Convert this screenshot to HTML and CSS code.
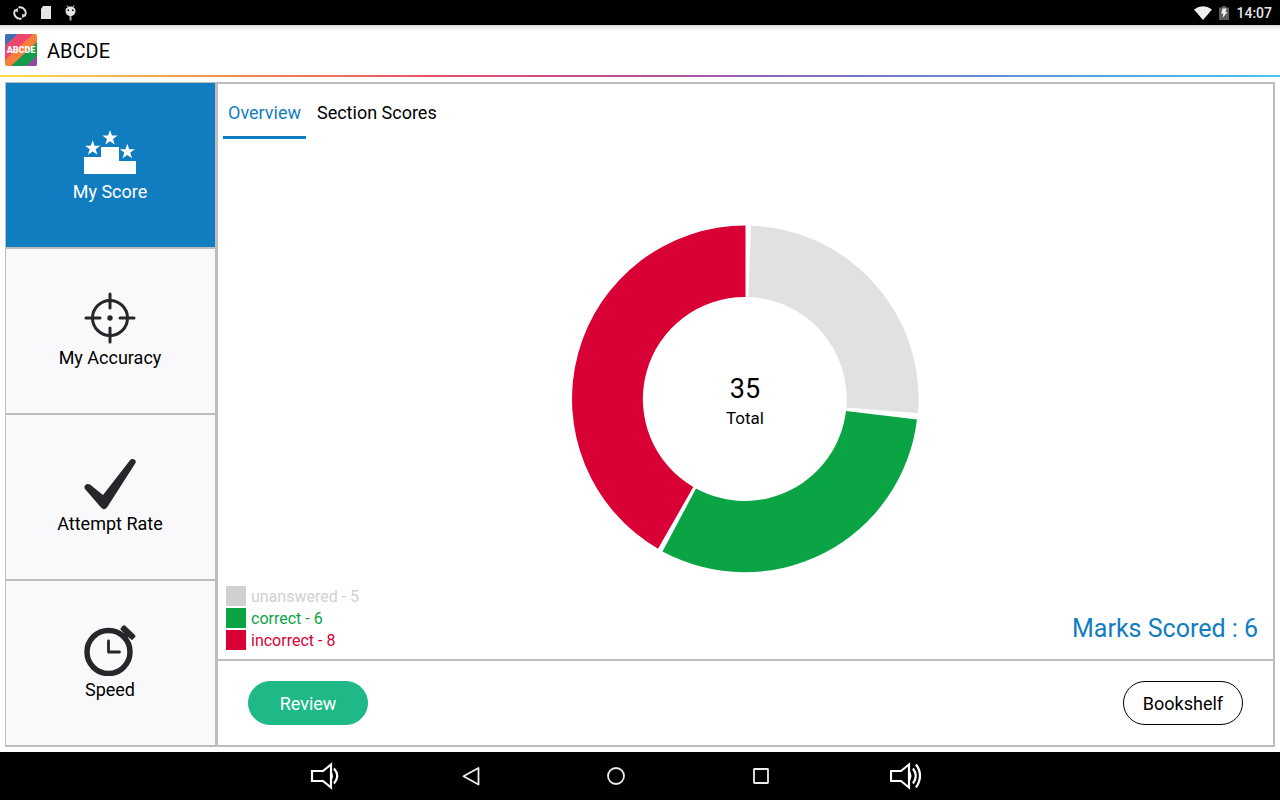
FILE: index.html
```html
<!DOCTYPE html>
<html lang="en">
<head>
<meta charset="utf-8">
<meta name="viewport" content="width=device-width, initial-scale=1">
<title>ABCDE</title>
<link rel="stylesheet" href="styles.css">
</head>
<body>
<div class="status-bar">
  <div class="status-icons">
    <svg width="14" height="14" viewBox="0 0 14 14" aria-hidden="true"><g fill="none" stroke="#e6e6e6" stroke-width="1.900"><path d="M8.500 12.500A5.600 5.600 0 0 1 2.300 4M5.500 1.500A5.600 5.600 0 0 1 11.700 10"/></g><path d="M.8 4.200L4.800 2v4.200zM13.200 9.800L9.200 12V7.800z" fill="#e6e6e6"/></svg>
    <svg width="10" height="13" viewBox="0 0 10 13" aria-hidden="true"><path d="M2 0h8v13H0V3z" fill="#e6e6e6"/></svg>
    <svg width="11" height="16" viewBox="0 0 11 16" aria-hidden="true"><path d="M2 .5l1.500 2M9 .5l-1.500 2" stroke="#e6e6e6"/><path d="M.5 6C.5 3 3 1.500 5.500 1.500S10.500 3 10.500 6C10.500 9 8 11 5.500 11S.5 9 .5 6z" fill="#e6e6e6"/><path d="M4.500 11h2v4.500h-2z" fill="#aaa"/><path d="M2.500 4.500h1.500v1.500H2.500zM7 4.500h1.500v1.500H7z" fill="#000"/></svg>
  </div>
  <div class="status-info">
    <svg width="18" height="14" viewBox="0 0 18 14" aria-hidden="true"><path d="M0 3.500Q9-3 18 3.500L9 14z" fill="#eee"/></svg>
    <svg width="10" height="14" viewBox="0 0 10 14" aria-hidden="true"><path d="M3 0h4v1.500h3V14H0V1.500h3z" fill="#5c5c5c"/><path d="M3.500 2.500h4L6.500 6H8.500L3.500 12l.8-4.300H2.200z" fill="#eee"/></svg>
    <span class="clock">14:07</span>
  </div>
</div>

<header class="app-header">
  <div class="logo">
    <svg class="logo-art" viewBox="0 0 32 32" aria-hidden="true"><path d="M0 0h32v32H0z" fill="#f57f3b"/><path d="M0 0h13L0 12z" fill="#3d6db5"/><path d="M13 0h15L0 26V12z" fill="#f0456f"/><path d="M32 8v14L21 32H6z" fill="#119c4b"/><path d="M32 22v10H21z" fill="#8e4a9e"/></svg>
    <span class="logo-text">ABCDE</span>
  </div>
  <h1 class="app-title">ABCDE</h1>
</header>
<div class="rainbow"></div>

<main class="workspace">
  <nav class="side-nav" aria-label="Reports">
    <button class="side-item side-item-active" type="button">
      <svg class="side-icon" viewBox="0 0 52 52" aria-hidden="true"><path d="M0 31h17V21h18v14h17v13H0z" fill="#fff"/><g fill="#fff"><path id="star" d="M26 4l1.900 5.500h5.700l-4.600 3.400 1.700 5.600-4.700-3.300-4.700 3.300 1.700-5.600-4.600-3.400h5.700z"/><use href="#star" x="-17.300" y="10.300"/><use href="#star" x="17.300" y="13.700"/></g></svg>
      <span>My Score</span>
    </button>
    <button class="side-item" type="button">
      <svg class="side-icon" viewBox="0 0 52 52" aria-hidden="true"><g fill="none" stroke="#26272b" stroke-width="3"><circle cx="26" cy="26" r="17.500"/><path stroke-linecap="round" d="M26 2v14M26 36v14M2 26h14M36 26h14"/></g><circle cx="26" cy="26" r="2.700" fill="#26272b"/></svg>
      <span>My Accuracy</span>
    </button>
    <button class="side-item" type="button">
      <svg class="side-icon" viewBox="0 0 52 52" aria-hidden="true"><path d="M1 31C-1 28 2.500 24.500 6 26.500L19 37 46 2.300C48-.2 53 1.500 51.500 5L23 49.500Q20 53 17 49.500z" fill="#26272b"/></svg>
      <span>Attempt Rate</span>
    </button>
    <button class="side-item" type="button">
      <svg class="side-icon" viewBox="0 0 52 52" aria-hidden="true"><circle cx="24.500" cy="28" r="21.500" fill="none" stroke="#26272b" stroke-width="5.500"/><path d="M24.500 17v11h11" fill="none" stroke="#26272b" stroke-width="2.800" stroke-linecap="round" stroke-linejoin="round"/><path d="M41 1.500L51 11q1 1.200 0 2.300l-2 2q-1 1-2.200 0L44 13l-2.500 3-4-4 2.500-3-3.200-2.900q-1-1 0-2.200l2-2.200q1-1 2.200-.2z" fill="#26272b"/></svg>
      <span>Speed</span>
    </button>
  </nav>

  <section class="report">
    <div class="tabs" role="tablist">
      <button class="tab tab-active" type="button" role="tab" aria-selected="true">Overview</button>
      <button class="tab" type="button" role="tab" aria-selected="false">Section Scores</button>
    </div>
    <div class="chart">
      <svg class="donut" viewBox="0 0 348 348" role="img" aria-label="5 unanswered, 6 correct, 8 incorrect">
        <path d="M180 .7A173.500 173.500 0 0 1 347 188L275.300 182.500A102 102 0 0 0 177.500 72z" fill="#e1e1e1"/>
        <path d="M346 194.500A173.500 173.500 0 0 1 91.500 326.500L125 263.500A102 102 0 0 0 275 186z" fill="#0ba444"/>
        <path d="M174.500.5A173.500 173.500 0 0 0 87 323.800L122.300 262A102 102 0 0 1 174.500 72z" fill="#d80035"/>
      </svg>
      <div class="total"><span class="total-value">35</span><span class="total-label">Total</span></div>
    </div>
    <div class="summary">
      <ul class="legend">
        <li class="legend-item unanswered"><i class="swatch"></i>unanswered - 5</li>
        <li class="legend-item correct"><i class="swatch"></i>correct - 6</li>
        <li class="legend-item incorrect"><i class="swatch"></i>incorrect - 8</li>
      </ul>
      <p class="marks">Marks Scored : 6</p>
    </div>
    <div class="actions">
      <button class="pill pill-primary" type="button">Review</button>
      <button class="pill" type="button">Bookshelf</button>
    </div>
  </section>
</main>

<nav class="system-nav" aria-label="System">
  <button class="sys-button" type="button" aria-label="Volume down"><svg width="32" height="28" viewBox="0 0 32 28"><g fill="none" stroke="#fff" stroke-width="2.200"><path d="M1 9h11l8-6.500v23L12 19H1z" transform="translate(1)"/><path d="M24 6.500q6.500 7.500 0 15"/></g><path d="M20 8q6 6 0 12z" fill="#fff"/></svg></button>
  <button class="sys-button" type="button" aria-label="Back"><svg width="32" height="28" viewBox="0 0 32 28"><path d="M23.500 6v16.500L8.500 14.200z" fill="none" stroke="#eee" stroke-width="1.800" stroke-linejoin="round"/></svg></button>
  <button class="sys-button" type="button" aria-label="Home"><svg width="32" height="28" viewBox="0 0 32 28"><circle cx="16" cy="14" r="8" fill="none" stroke="#eee" stroke-width="1.800"/></svg></button>
  <button class="sys-button" type="button" aria-label="Recent apps"><svg width="32" height="28" viewBox="0 0 32 28"><rect x="9" y="7" width="14" height="14" rx=".5" fill="none" stroke="#eee" stroke-width="1.800"/></svg></button>
  <button class="sys-button" type="button" aria-label="Volume up"><svg width="32" height="28" viewBox="0 0 32 28"><g fill="none" stroke="#fff" stroke-width="2.200"><path d="M1 9h10l8-6.500v23L11 19H1z"/><path d="M23 6.500q5.500 7.500 0 15M26 2.500q8 11 0 23"/></g><path d="M19 8q5 6 0 12z" fill="#fff"/></svg></button>
</nav>
</body>
</html>
```
FILE: styles.css
```css
* { box-sizing: border-box; }

body {
  margin: 0;
  min-height: 100vh;
  display: flex;
  flex-direction: column;
  background: #fff;
  color: #000;
  font-family: Roboto, sans-serif;
  font-size: 18px;
}

button {
  margin: 0;
  padding: 0;
  border: 0;
  background: none;
  color: inherit;
  font: inherit;
  cursor: pointer;
}

svg { display: block; }

.status-bar {
  display: flex;
  align-items: center;
  justify-content: space-between;
  height: 25px;
  padding: 0 8px 0 13px;
  background: #000;
}

.status-icons { display: flex; align-items: center; gap: 14px; }
.status-info { display: flex; align-items: center; gap: 7px; }

.clock {
  color: #e6e6e6;
  font-size: 14px;
  font-weight: 500;
  line-height: 24px;
}

.app-header {
  display: flex;
  align-items: center;
  gap: 10px;
  height: 50px;
  padding: 0 5px;
  background: linear-gradient(#dcdcdc, #fff 6px);
}

.logo {
  display: grid;
  grid-template-columns: 32px;
  place-items: center;
  width: 32px;
  height: 32px;
  border-radius: 2px;
  overflow: hidden;
}

.logo-art, .logo-text { grid-area: 1 / 1; }

.logo-text {
  color: #fff;
  font-size: 9px;
  font-weight: 900;
  line-height: 12px;
}

.app-title {
  margin: 0;
  padding-top: 2px;
  font-size: 20px;
  font-weight: 400;
  line-height: 24px;
}

.rainbow {
  height: 2px;
  background: linear-gradient(90deg, #f6e04a, #ef8354 20%, #e8506a 34%, #b8509a 50%, #7a72c8 66%, #5a9ae0 82%, #42c4f0);
}

.workspace {
  flex: 1;
  display: flex;
  padding: 5px;
}

.side-nav {
  display: flex;
  flex-direction: column;
  gap: 2px;
  width: 210px;
  padding: 1px 0 2px 1px;
  background: #bdbdbd;
}

.side-item {
  flex: 1;
  display: flex;
  flex-direction: column;
  align-items: center;
  justify-content: center;
  gap: 2px;
  padding-right: 1px;
  background: #f9f9fc;
  line-height: 24px;
}

.side-item-active { background: #117dc1; color: #fff; }
.side-icon { width: 52px; height: 52px; }

.report {
  flex: 1;
  display: flex;
  flex-direction: column;
  border: 2px solid #bdbdbd;
  border-left-width: 3px;
}

.tabs {
  display: flex;
  gap: 6px;
  padding: 0 5px;
}

.tab {
  height: 55px;
  padding: 4px 5px 0;
  border-bottom: 3px solid transparent;
}

.tab-active { color: #117dc1; border-bottom-color: #117dc1; }

.chart {
  flex: 1;
  display: grid;
  align-content: end;
  justify-content: center;
  align-items: center;
  justify-items: center;
  padding-right: 1px;
}

.donut { grid-area: 1 / 1; width: 348px; height: 348px; }

.total {
  grid-area: 1 / 1;
  display: flex;
  flex-direction: column;
  align-items: center;
  gap: 1px;
  padding-top: 5px;
}

.total-value { font-size: 27px; line-height: 32px; }
.total-label { font-size: 17px; line-height: 24px; }

.summary {
  display: flex;
  justify-content: space-between;
  align-items: flex-end;
  padding: 13px 15px 7px 8px;
}

.legend {
  margin: 0;
  padding: 0;
  list-style: none;
  font-size: 16px;
  line-height: 22px;
}

.legend-item { display: flex; gap: 5px; }
.swatch { width: 20px; height: 20px; background: currentColor; }
.unanswered { color: #d0d0d0; }
.correct { color: #0ba444; }
.incorrect { color: #d80035; }

.marks {
  margin: 0;
  padding-bottom: 7px;
  color: #117dc1;
  font-size: 25px;
  line-height: 32px;
}

.actions {
  display: flex;
  align-items: center;
  justify-content: space-between;
  height: 86px;
  padding: 0 30px;
  border-top: 2px solid #bdbdbd;
}

.pill {
  width: 120px;
  height: 44px;
  border: 1px solid #000;
  border-radius: 22px;
}

.pill-primary {
  border-color: #1eb987;
  background: #1eb987;
  color: #fff;
}

.system-nav {
  display: flex;
  justify-content: center;
  gap: 113px;
  height: 48px;
  padding-right: 48px;
  background: #000;
}

.sys-button { display: grid; place-items: center; }
```
